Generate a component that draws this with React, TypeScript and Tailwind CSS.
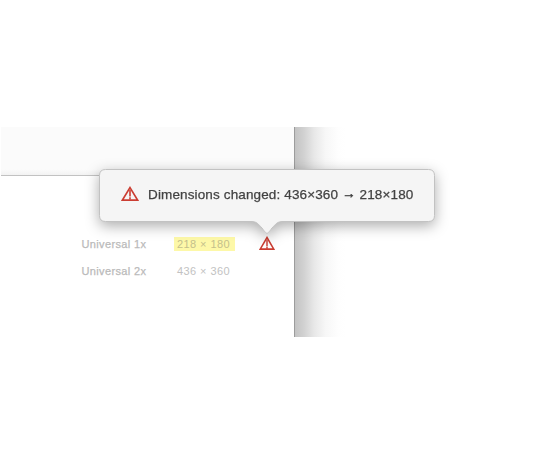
import React from "react";

function WarningIcon({ className }: { className: string }) {
  return (
    <svg viewBox="0 0 18 15" preserveAspectRatio="none" fill="none" stroke="#cb3d32" className={className}>
      <path d="M9 1.6 L16.6 14.1 H1.4 Z" strokeWidth="1.7" />
      <path d="M9 4 V10.6 M9 11.2 V13.6" strokeWidth="1.6" />
    </svg>
  );
}

function Row({ label, size, changed }: { label: string; size: string; changed?: boolean }) {
  return (
    <div className="flex h-[27px] items-center">
      <span className="w-[93px] whitespace-nowrap pl-[0.5px] text-[11px] tracking-[0.36px] text-[#bababa] [-webkit-text-stroke:0.25px_#bababa]">
        {label}
      </span>
      <span
        className={`mb-px flex h-[14px] w-[61px] items-center whitespace-nowrap pl-[3px] pt-px text-[11px] tracking-[0.42px] ${
          changed ? "bg-[#fdf8a8] text-[#c4c08c]" : "text-[#c2c2c2]"
        }`}
      >
        {size}
      </span>
      {changed && <WarningIcon className="mb-[3px] ml-6 h-[14px] w-4" />}
    </div>
  );
}

function Popover() {
  return (
    <div className="absolute left-[99px] top-[169px] h-[66px] w-[336px] [filter:drop-shadow(0_4px_7px_rgba(0,0,0,0.32))]">
      <svg className="absolute inset-0" width="336" height="66" viewBox="0 0 336 66">
        <path
          d="M6.5 .5 H329.5 Q335.5 .5 335.5 6.5 V46.5 Q335.5 52.5 329.5 52.5 H184 C178 52.5 177 55 173 59 C170 63 169 64.3 168 64.3 C167 64.3 166 63 163 59 C159 55 158 52.5 152 52.5 H6.5 Q.5 52.5 .5 46.5 V6.5 Q.5 .5 6.5 .5 Z"
          fill="#f5f5f5"
          stroke="#c2c2c2"
        />
      </svg>
      <div className="relative flex h-[52px] items-center pl-[22px]">
        <WarningIcon className="mb-[3px] h-[15px] w-[18px]" />
        <span className="ml-[9px] whitespace-nowrap text-[13.5px] tracking-[0.135px] text-[#424242] [-webkit-text-stroke:0.25px_#424242]">
          Dimensions changed: 436×360{" "}
          <span className="inline-block -translate-y-[1.5px] [-webkit-text-stroke:0.5px_#424242]">→</span> 218×180
        </span>
      </div>
    </div>
  );
}

export default function App() {
  return (
    <main className="relative h-[464px] w-[540px] overflow-hidden bg-white pl-px pt-[127px] font-['Liberation_Sans',sans-serif]">
      <div className="flex h-[210px]">
        <section className="w-[293px] bg-white">
          <div className="h-[49px] border-b border-[#c2c2c2] bg-[linear-gradient(#fbfbfb_88%,#f3f3f3)]" />
          <div className="pl-[80px] pt-[55px]">
            <Row label="Universal 1x" size="218 × 180" changed />
            <Row label="Universal 2x" size="436 × 360" />
          </div>
        </section>
        <div className="w-[52px] border-l border-[#9c9c9c] bg-[linear-gradient(90deg,#c3c3c3_0%,#d2d2d2_18%,#e8e8e8_38%,#f7f7f7_60%,#fefefe_85%,#fff_100%)]" />
      </div>
      <Popover />
    </main>
  );
}
